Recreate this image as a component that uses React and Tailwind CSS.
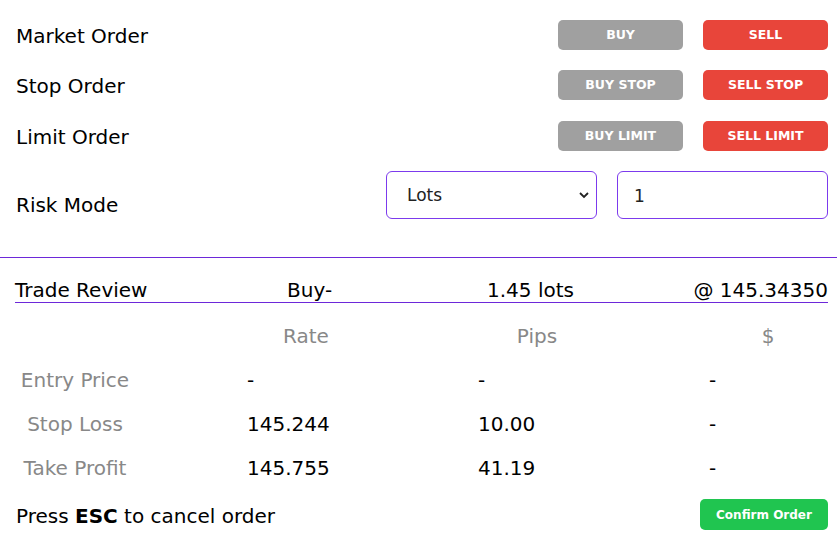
import React, { useState } from 'react'

const orderRows = [
  { label: "Market Order", buy: "BUY", sell: "SELL", gap: "" },
  { label: "Stop Order", buy: "BUY STOP", sell: "SELL STOP", gap: "mt-[20px]" },
  { label: "Limit Order", buy: "BUY LIMIT", sell: "SELL LIMIT", gap: "mt-[21px]" },
];

const reviewRows = [
  { label: "Entry Price", rate: "-", pips: "-", usd: "-" },
  { label: "Stop Loss", rate: "145.244", pips: "10.00", usd: "-" },
  { label: "Take Profit", rate: "145.755", pips: "41.19", usd: "-" },
];

const App = () => {
  const [mode, setMode] = useState("Lots");
  const [amount, setAmount] = useState("1");

  return (
    <div className="w-[837px] h-[538px] bg-white text-black font-['DejaVu_Sans',Verdana,sans-serif] text-[20px] overflow-hidden">
      {/* order buttons */}
      <div className="pt-[20px] pl-[16px] pr-[9px]">
        {orderRows.map((row) => (
          <div key={row.label} className={`flex items-center h-[30px] ${row.gap}`}>
            <div className="flex-1 leading-none pt-[2px]">{row.label}</div>
            <button className="w-[125px] h-[30px] rounded-[5px] bg-[#a0a0a0] text-white font-bold text-[12.5px] leading-none">
              {row.buy}
            </button>
            <button className="ml-[20px] w-[125px] h-[30px] rounded-[5px] bg-[#e8453a] text-white font-bold text-[12.5px] leading-none">
              {row.sell}
            </button>
          </div>
        ))}

        {/* risk mode */}
        <div className="flex items-center mt-[20px] h-[48px]">
          <div className="flex-1 leading-none pt-[19px]">Risk Mode</div>
          <div className="relative w-[211px] h-[48px]">
            <select
              value={mode}
              onChange={(e) => setMode(e.target.value)}
              className="appearance-none w-full h-full rounded-[6px] border border-[#7c3aed] bg-white pl-[20px] pt-[2px] text-[17px] text-[#222] outline-none"
            >
              <option>Lots</option>
              <option>Percent</option>
              <option>Amount</option>
            </select>
            <svg className="absolute right-[7px] top-[19px] pointer-events-none" width="12" height="10" viewBox="0 0 12 10">
              <path d="M2 3 L6 7 L10 3" fill="none" stroke="#222" strokeWidth="1.8" />
            </svg>
          </div>
          <input
            value={amount}
            onChange={(e) => setAmount(e.target.value)}
            className="ml-[20px] w-[211px] h-[48px] rounded-[6px] border border-[#7c3aed] pl-[16px] pt-[2px] text-[17px] text-[#222] outline-none"
          />
        </div>
      </div>

      <div className="mt-[38px] h-px bg-[#6d28d9]"></div>

      {/* trade review */}
      <div className="pl-[15px] pr-[9px]">
        <div className="flex items-end mt-[21px] pb-[2px] border-b border-[#6d28d9] leading-none h-[24px]">
          <div className="w-[272px]">Trade Review</div>
          <div className="w-[200px]">Buy-</div>
          <div className="flex-1">1.45 lots</div>
          <div>@ 145.34350</div>
        </div>

        <div className="flex justify-between mt-[23px] text-[#888] leading-none">
          <div className="w-[120px]"></div>
          <div className="w-[120px] text-center">Rate</div>
          <div className="w-[120px] text-center">Pips</div>
          <div className="w-[120px] text-center">$</div>
        </div>

        {reviewRows.map((row) => (
          <div key={row.label} className="flex justify-between mt-[24px] leading-none">
            <div className="w-[120px] text-center text-[#888]">{row.label}</div>
            <div className="w-[120px] pl-px">{row.rate}</div>
            <div className="w-[120px] pl-px">{row.pips}</div>
            <div className="w-[120px] pl-px">{row.usd}</div>
          </div>
        ))}

        <div className="flex items-center justify-between mt-[21px]">
          <div className="leading-none pl-px pt-[2px]">
            Press <b>ESC</b> to cancel order
          </div>
          <button className="w-[128px] h-[31px] rounded-[5px] bg-[#20c550] text-white font-bold text-[12px] leading-none">
            Confirm Order
          </button>
        </div>
      </div>
    </div>
  )
}

export default App
